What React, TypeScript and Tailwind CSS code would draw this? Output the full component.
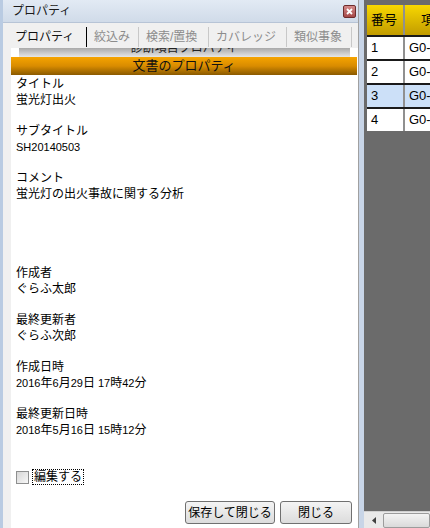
import React from "react";

function Mixed({ t }: { t: string }) {
  const parts = t.split(/([\x20-\x7e]+)/);
  return (
    <>
      {parts.map((p, i) =>
        /^[\x20-\x7e]+$/.test(p) ? (
          <span key={i} className="text-[11px]">
            {p}
          </span>
        ) : (
          <React.Fragment key={i}>{p}</React.Fragment>
        )
      )}
    </>
  );
}

function Field({ label, value, last, tall }: { label: string; value: string; last?: boolean; tall?: boolean }) {
  return (
    <div className={tall ? "h-[95px]" : last ? "h-[32px]" : "h-[47px]"}>
      <div className="h-[16px] leading-[16px]">{label}</div>
      <div className="h-[16px] leading-[16px]">
        <Mixed t={value} />
      </div>
    </div>
  );
}

const tabs = [
  { t: "絞込み", w: "w-[52px]" },
  { t: "検索/置換", w: "w-[70px]" },
  { t: "カバレッジ", w: "w-[78px]" },
  { t: "類似事象", w: "w-[65px]" },
];

export default function App() {
  return (
    <div className="w-[430px] h-[528px] flex overflow-hidden bg-[#6b6b6b] font-['Liberation_Sans','Noto_Sans_CJK_JP',sans-serif] text-[12px] text-black">
      {/* Left panel */}
      <div className="w-[359px] shrink-0 h-full flex flex-col border-l-[3px] border-l-[#b9cbe2] border-r border-r-[#a0a0a0] bg-[#f0f0f0]">
        {/* Title bar */}
        <div className="h-[23px] flex items-center justify-between pl-[9px] pr-[2px] bg-gradient-to-b from-[#e2eaf4] to-[#d0dbe9] border-b border-[#b7c4d6]">
          <span className="leading-[16px] text-[#1a1a1a]">プロパティ</span>
          <div className="w-[13px] h-[13px] rounded-[2px] border border-[#6d2c2c] bg-gradient-to-b from-[#d48a8a] to-[#a54848] flex items-center justify-center">
            <svg width="7" height="7" viewBox="0 0 7 7">
              <path d="M1 1 L6 6 M6 1 L1 6" stroke="#fff" strokeWidth="1.8" />
            </svg>
          </div>
        </div>
        {/* Tabs */}
        <div className="h-[25px] pt-[4px] pl-[7px] flex">
          <div className="w-[77px] h-[20px] pl-[5px] leading-[20px] border-r border-black text-[#111]">プロパティ</div>
          {tabs.map((tb) => (
            <div key={tb.t} className={`${tb.w} h-[20px] pl-[7px] leading-[20px] border-r border-[#c8c8c8] text-[#8c8c8c]`}>
              {tb.t}
            </div>
          ))}
        </div>
        {/* Body */}
        <div className="flex-1 flex pl-[8px]">
          <div className="flex-1 bg-white flex flex-col">
            {/* collapsed section band */}
            <div className="h-[9px] flex">
              <div className="w-[8px] h-full bg-white" />
              <div className="flex-1 h-full overflow-hidden bg-gradient-to-b from-[#a9a9a9] to-[#e6e6e6] flex justify-center">
                <div className="mt-[-8px] h-[16px] leading-[16px] text-[#222]">診断項目プロパティ</div>
              </div>
              <div className="w-[8px] h-full bg-white" />
            </div>
            {/* orange header */}
            <div className="h-[18px] mr-[1px] bg-gradient-to-b from-[#f6a400] via-[#d98c00] to-[#8a5a00] flex items-center justify-center">
              <span className="text-[13px] leading-[16px] text-[#111]">文書のプロパティ</span>
            </div>
            {/* fields */}
            <div className="pt-[1px] pl-[5px] flex flex-col">
              <Field label="タイトル" value="蛍光灯出火" />
              <Field label="サブタイトル" value="SH20140503" />
              <Field label="コメント" value="蛍光灯の出火事故に関する分析" tall />
              <Field label="作成者" value="ぐらふ太郎" />
              <Field label="最終更新者" value="ぐらふ次郎" />
              <Field label="作成日時" value="2016年6月29日 17時42分" />
              <Field label="最終更新日時" value="2018年5月16日 15時12分" last />
              <div className="mt-[31px] h-[16px] flex items-center">
                <div className="w-[13px] h-[13px] border border-[#8e8f8f] bg-gradient-to-br from-[#d6d6d6] to-[#f8f8f8]" />
                <div className="ml-[3px] h-[16px] leading-[14px] px-[1px] border border-dotted border-black">編集する</div>
              </div>
            </div>
            <div className="mt-[16px] flex justify-end gap-[5px] pr-[6px]">
              <button className="w-[90px] h-[23px] rounded-[3px] border border-[#707070] bg-gradient-to-b from-[#f4f4f4] to-[#dcdcdc] leading-[16px] text-[12px]">
                保存して閉じる
              </button>
              <button className="w-[72px] h-[23px] rounded-[3px] border border-[#707070] bg-gradient-to-b from-[#f4f4f4] to-[#dcdcdc] leading-[16px] text-[12px]">
                閉じる
              </button>
            </div>
          </div>
        </div>
      </div>
      {/* Splitter */}
      <div className="w-[5px] shrink-0 h-full bg-[#c8d5e7]" />
      {/* Right area */}
      <div className="flex-1 min-w-0 h-full flex flex-col">
        <div className="flex-1 pt-[5px] pl-[3px] overflow-hidden">
          <div className="w-[200px] text-[13px]">
            <div className="h-[30px] flex bg-gradient-to-b from-[#f8d800] to-[#c29c00]">
              <div className="w-[38px] pl-[4px] leading-[30px] border-r-2 border-[#909090]">番号</div>
              <div className="flex-1 pl-[16px] leading-[30px]">項目名</div>
            </div>
            {["1", "2", "3", "4"].map((n) => (
              <div key={n} className={`h-[24px] flex border-t-2 border-[#1a1a1a] ${n === "3" ? "bg-[#cce0f8]" : "bg-white"}`}>
                <div className="w-[38px] pl-[4px] leading-[22px] border-r-2 border-[#909090]">{n}</div>
                <div className="flex-1 pl-[4px] leading-[22px]">G0-000{n}</div>
              </div>
            ))}
          </div>
        </div>
        {/* Scrollbar */}
        <div className="h-[17px] flex items-center bg-[#e9e9e9] border-t border-[#d0d0d0] pl-[1px]">
          <div className="w-[18px] h-full flex items-center justify-center">
            <svg width="4" height="7" viewBox="0 0 4 7">
              <path d="M4 0 L0 3.5 L4 7 Z" fill="#404040" />
            </svg>
          </div>
          <div className="flex-1 h-[15px] rounded-[2px] border border-[#9c9c9c] bg-gradient-to-b from-[#f4f4f4] to-[#dadada]" />
        </div>
      </div>
    </div>
  );
}
